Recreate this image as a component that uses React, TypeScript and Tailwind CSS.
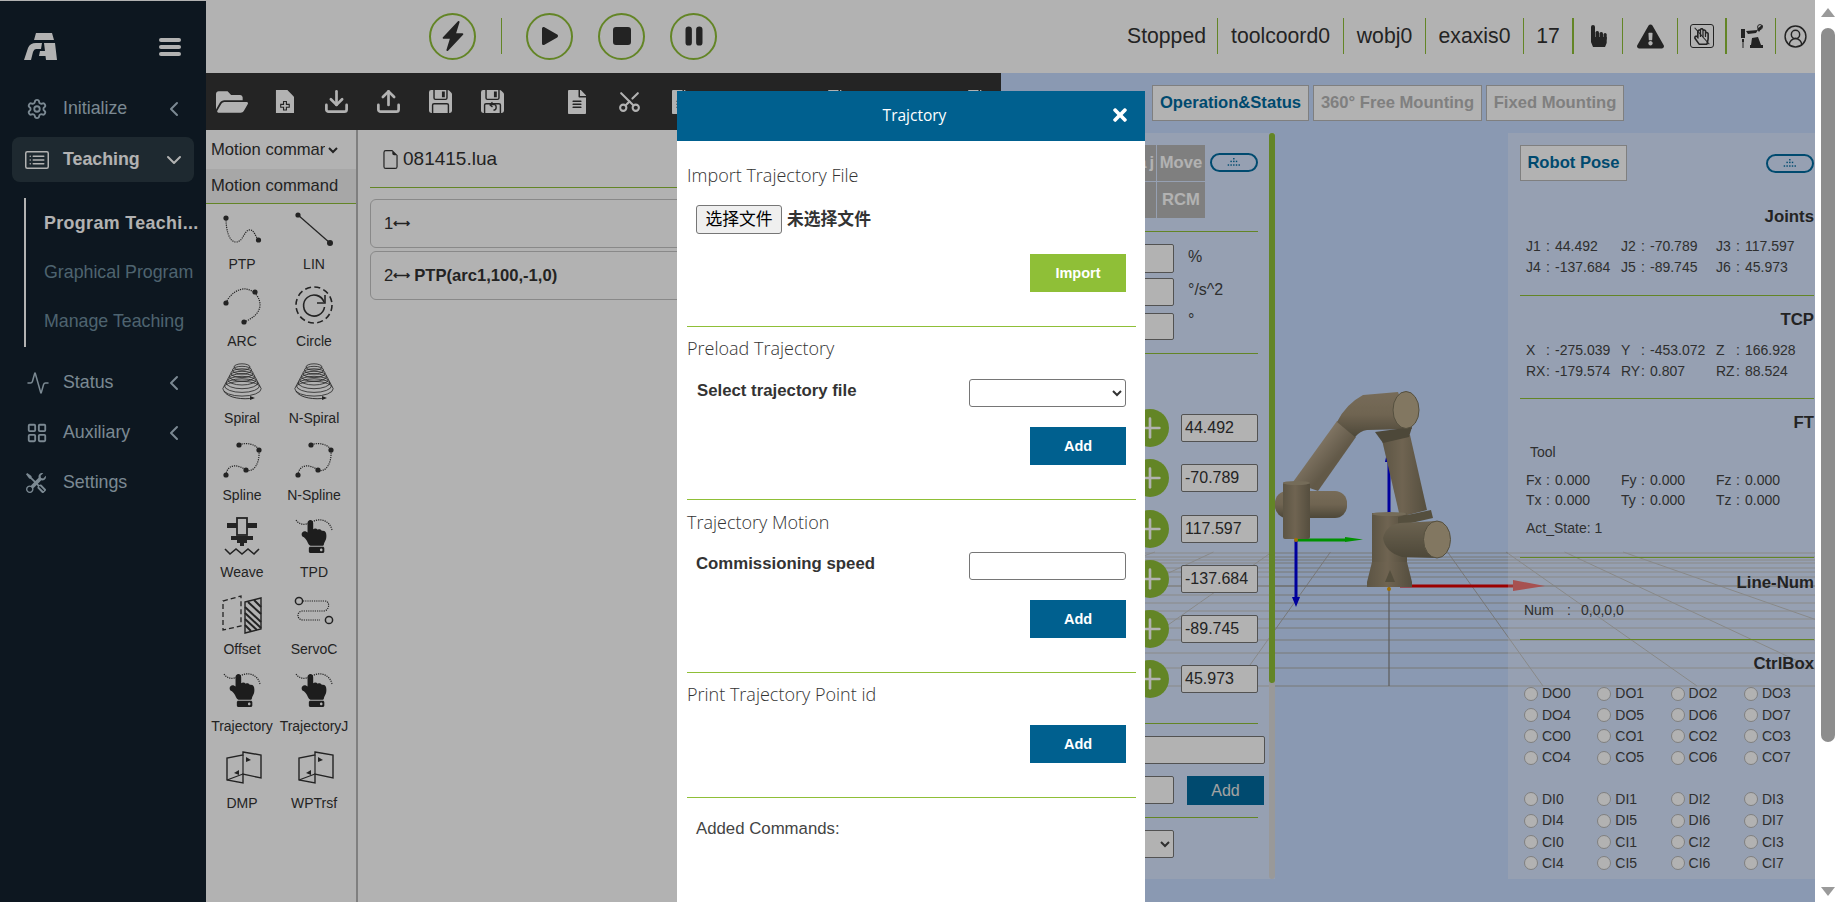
import {
  Activity,
  ChevronDown,
  ChevronLeft,
  CircleUserRound,
  Download,
  LayoutGrid,
  Plus,
  Scissors,
  Settings,
  Upload,
} from "lucide-react";
import {
  BsCardList,
  BsFileEarmark,
  BsFloppyFill,
  BsLightningChargeFill,
  BsPauseFill,
  BsPlayFill,
  BsStopFill,
  BsTools,
} from "react-icons/bs";
import {
  FaExclamationTriangle,
  FaFileAlt,
  FaFolderOpen,
  FaHandPointUp,
  FaRegHandPaper,
  FaTimes,
} from "react-icons/fa";
import type { ReactNode } from "react";

const DOT = "1.2 1";

const Dotted = ({ d }: { d: string }) => (
  <path d={d} fill="none" stroke="#333" strokeWidth="1.2" strokeDasharray={DOT} />
);

const Dots = ({ pts, r = 2.6 }: { pts: number[][]; r?: number }) => (
  <>
    {pts.map(([x, y]) => (
      <circle key={`${x}-${y}`} cx={x} cy={y} r={r} fill="#333" />
    ))}
  </>
);

const Box = ({ children }: { children: ReactNode }) => (
  <svg viewBox="0 0 40 40" className="w-10 h-10 overflow-visible">
    {children}
  </svg>
);

const PtpIcon = () => (
  <Box>
    <Dotted d="M4 10C4 22 7 34 14 34C21 34 22 23 27 22C32 21 33 28 36.5 32" />
    <Dots pts={[[4, 10], [36.5, 32]]} />
  </Box>
);

const LinIcon = () => (
  <Box>
    <path d="M4 7L36 35" stroke="#333" strokeWidth="1.2" />
    <Dots pts={[[4, 7]]} />
    <Dots pts={[[36, 35]]} r={3} />
  </Box>
);

const ArcIcon = () => (
  <Box>
    <Dotted d="M4 18C8 8 18 3 24 4C32 5 38 12 38 20C38 28 30 34 22 37" />
    <Dots pts={[[4, 18], [33, 7], [22, 37]]} />
  </Box>
);

const CircleIcon = () => (
  <Box>
    <circle cx="20" cy="20" r="18" fill="none" stroke="#333" strokeWidth="1.6" strokeDasharray="6 3.4" />
    <path d="M30 17A10.5 10.5 0 1 0 30.5 22" fill="none" stroke="#333" strokeWidth="1.6" />
    <path d="M31 10V18H23" fill="none" stroke="#333" strokeWidth="1.6" />
  </Box>
);

const SpiralIcon = () => (
  <Box>
    {[0, 1, 2, 3, 4, 5, 6, 7].map((i) => (
      <ellipse
        key={i}
        cx="20"
        cy={5 + i * 3.1}
        rx={8 + i * 1.6}
        ry={3.2 + i * 0.6}
        fill="none"
        stroke="#333"
        strokeWidth="0.8"
      />
    ))}
    <path d="M2 29C5 36 22 38 31 36" fill="none" stroke="#333" strokeWidth="0.9" />
    <path d="M28 34L33 36L28 38Z" fill="#333" />
  </Box>
);

const SplineIcon = () => (
  <Box>
    <Dotted d="M4 36C5 26 14 24 24 31C32 34 38 24 37 11C34 5 24 3 17 6" />
    <Dots pts={[[17, 6], [37, 11], [24, 31], [4, 36]]} />
  </Box>
);

const WeaveIcon = () => (
  <Box>
    <rect x="5" y="7" width="10" height="5" fill="#333" />
    <rect x="25" y="7" width="10" height="5" fill="#333" />
    <rect x="15" y="2" width="10" height="17" fill="none" stroke="#333" strokeWidth="1.8" />
    <rect x="9" y="20" width="22" height="4" fill="#333" />
    <rect x="15" y="24" width="10" height="3" fill="#333" />
    <rect x="18" y="27" width="4" height="3" fill="#333" />
    <path d="M3 33L8 38L14 33L20 38L26 33L32 38L37 33" fill="none" stroke="#333" strokeWidth="1.6" />
  </Box>
);

const HandTrace = () => (
  <Box>
    <foreignObject x="6" y="4" width="28" height="36">
      <div className="flex justify-center text-[#2a2a2a]">
        <FaHandPointUp size={33} />
      </div>
    </foreignObject>
    <Dotted d="M2 4C7 11 14 8 20 5C27 2 36 5 38 14" />
  </Box>
);

const OffsetIcon = () => (
  <Box>
    <path d="M1 8L19 3V33L1 37Z" fill="none" stroke="#333" strokeWidth="1.3" strokeDasharray="5 3" />
    <path d="M23 9L39 5V36L23 40Z" fill="none" stroke="#333" strokeWidth="1.4" />
    <path d="M23 14L39 29M23 20L39 35M23 26L35 37M23 32L29 38M26 9L39 21M32 7L39 14" stroke="#333" strokeWidth="2" />
  </Box>
);

const ServoIcon = () => (
  <Box>
    <Dotted d="M9 8H31C36 8 36 17 30 18H8C2 19 3 27 9 27H26" />
    <circle cx="5" cy="8" r="3.6" fill="none" stroke="#333" strokeWidth="1.5" />
    <circle cx="35" cy="27" r="3.6" fill="none" stroke="#333" strokeWidth="1.5" />
  </Box>
);

const DmpIcon = () => (
  <Box>
    <path d="M21 5L39 8V31L21 27V36L5 33V11L21 8Z" fill="none" stroke="#333" strokeWidth="1.4" />
    <path d="M21 8V27M21 27L5 33" fill="none" stroke="#333" strokeWidth="1.2" />
    <path d="M24 10L29 13L24 15Z" fill="#333" />
    <path d="M17 28L12 26L17 23Z" fill="#333" />
  </Box>
);

const commands: { label: string; icon: ReactNode }[] = [
  { label: "PTP", icon: <PtpIcon /> },
  { label: "LIN", icon: <LinIcon /> },
  { label: "ARC", icon: <ArcIcon /> },
  { label: "Circle", icon: <CircleIcon /> },
  { label: "Spiral", icon: <SpiralIcon /> },
  { label: "N-Spiral", icon: <SpiralIcon /> },
  { label: "Spline", icon: <SplineIcon /> },
  { label: "N-Spline", icon: <SplineIcon /> },
  { label: "Weave", icon: <WeaveIcon /> },
  { label: "TPD", icon: <HandTrace /> },
  { label: "Offset", icon: <OffsetIcon /> },
  { label: "ServoC", icon: <ServoIcon /> },
  { label: "Trajectory", icon: <HandTrace /> },
  { label: "TrajectoryJ", icon: <HandTrace /> },
  { label: "DMP", icon: <DmpIcon /> },
  { label: "WPTrsf", icon: <DmpIcon /> },
];

const Logo = () => (
  <svg viewBox="24 22 33 27" className="w-[33px] h-[27px]" fill="#fff">
    <path d="M36 22H52L54 29H34Z" />
    <path d="M24 49L28 37Q30 32 36 32H42L41 38H36Q34 38 33 41L31 49Z" />
    <path d="M44 32H55L57 49H46L45.5 45H39L40 40H45Z" />
  </svg>
);

const Hamburger = () => (
  <div className="flex flex-col gap-[3px] w-[22px]">
    <div className="h-[4px] rounded-sm bg-white" />
    <div className="h-[4px] rounded-sm bg-white" />
    <div className="h-[4px] rounded-sm bg-white" />
  </div>
);

const NavItem = ({
  icon,
  label,
  className,
}: {
  icon: ReactNode;
  label: string;
  className: string;
}) => (
  <div className={`flex items-center h-[45px] mx-3 pl-[14px] pr-[8px] text-[#b0c4d2] ${className}`}>
    <span className="w-[37px] shrink-0">{icon}</span>
    <span className="flex-1 text-[17.8px]">{label}</span>
    <ChevronLeft size={24} strokeWidth={2} />
  </div>
);

const Sidebar = () => (
  <aside className="w-[206px] shrink-0 mt-px bg-[#13222e] flex flex-col">
    <div className="flex items-center justify-between pl-6 pr-[25px] pt-[21px] h-[70px]">
      <Logo />
      <Hamburger />
    </div>
    <NavItem className="mt-[15px]" label="Initialize" icon={<Settings size={22} />} />
    <div className="flex items-center h-[45px] mx-3 mt-[6px] pl-[13px] pr-[8px] rounded-lg bg-[#2c3c45] text-white">
      <span className="w-[38px] shrink-0">
        <BsCardList size={24} />
      </span>
      <span className="flex-1 text-[17.8px] font-bold">Teaching</span>
      <ChevronDown size={24} strokeWidth={2} />
    </div>
    <div className="ml-6 mt-[16px] h-[149px] pt-[1px] border-l-2 border-white pl-[18px] flex flex-col text-[#708fa0] text-[17.8px]">
      <div className="h-[49px] shrink-0 pb-[1px] flex items-center font-bold text-white tracking-[0.4px] whitespace-nowrap">
        Program Teachi...
      </div>
      <div className="h-[49px] shrink-0 flex items-center whitespace-nowrap">Graphical Program</div>
      <div className="h-[49px] shrink-0 flex items-center whitespace-nowrap">Manage Teaching</div>
    </div>
    <NavItem className="mt-[13px]" label="Status" icon={<Activity size={24} strokeWidth={1.5} />} />
    <NavItem className="mt-[5px]" label="Auxiliary" icon={<LayoutGrid size={22} />} />
    <div className="flex items-center h-[45px] mx-3 mt-[5px] pl-[14px] text-[#b0c4d2]">
      <span className="w-[37px] shrink-0">
        <BsTools size={20} />
      </span>
      <span className="text-[17.8px]">Settings</span>
    </div>
  </aside>
);

const RoundButton = ({ children }: { children: ReactNode }) => (
  <button className="w-[47px] h-[47px] rounded-full border-[2.5px] border-[#8fbf37] flex items-center justify-center text-[#333]">
    {children}
  </button>
);

const StatusCell = ({
  children,
  className,
}: {
  children: ReactNode;
  className: string;
}) => (
  <div className={`h-[36px] flex items-center justify-center border-[#8fbf37] ${className}`}>
    {children}
  </div>
);

const FingerIcon = () => (
  <svg viewBox="0 0 17 22" className="w-[17px] h-[22px]" fill="#333">
    <rect x="1" y="0" width="4" height="14" rx="2" />
    <rect x="5.5" y="6" width="3.5" height="9" rx="1.5" />
    <rect x="9.5" y="7" width="3.5" height="8" rx="1.5" />
    <rect x="13.5" y="8" width="3.2" height="7" rx="1.5" />
    <path d="M1 12H16.7V18L15 22H3L1 17Z" />
  </svg>
);

const NoTouchIcon = () => (
  <div className="relative w-[24px] h-[24px] rounded-[3px] border border-[#333] flex items-center justify-center text-[#333]">
    <FaRegHandPaper size={17} />
    <svg viewBox="0 0 24 24" className="absolute inset-0 w-full h-full">
      <path d="M4 3L20 21" stroke="#333" strokeWidth="1.2" />
    </svg>
  </div>
);

const RobotSmall = () => (
  <svg viewBox="0 0 24 24" className="w-[24px] h-[24px]" fill="#333">
    <rect x="11" y="21" width="13" height="3" />
    <path d="M13 14L19 13L22 21H12Z" />
    <path d="M7 7L19 6L17 9L9 10Z" />
    <path d="M18 5L23 1L24 2L20 8Z" />
    <circle cx="21" cy="3" r="2.4" fill="none" stroke="#333" />
    <rect x="2" y="5" width="4" height="9" />
    <rect x="3" y="15" width="2" height="3" />
    <path d="M4 18V24" stroke="#333" strokeWidth="1" />
  </svg>
);

const TopBar = () => (
  <header className="h-[73px] shrink-0 bg-white flex items-center justify-between pb-[1px] text-[#333]">
    <div className="flex items-center pl-[223px]">
      <RoundButton>
        <BsLightningChargeFill size={30} />
      </RoundButton>
      <div className="w-px h-[36px] bg-[#8fbf37] ml-[25px] mr-[24px]" />
      <div className="flex items-center gap-[25px]">
        <RoundButton>
          <BsPlayFill size={32} />
        </RoundButton>
        <RoundButton>
          <BsStopFill size={32} />
        </RoundButton>
        <RoundButton>
          <BsPauseFill size={34} />
        </RoundButton>
      </div>
    </div>
    <div className="flex items-center text-[21.2px]">
      <StatusCell className="w-[105px] border-r pl-[3px]">Stopped</StatusCell>
      <StatusCell className="w-[126px] border-r">toolcoord0</StatusCell>
      <StatusCell className="w-[82px] border-r">wobj0</StatusCell>
      <StatusCell className="w-[98px] border-r">exaxis0</StatusCell>
      <StatusCell className="w-[50px] border-r-2">17</StatusCell>
      <StatusCell className="w-[49px] border-r">
        <FingerIcon />
      </StatusCell>
      <StatusCell className="w-[55px] border-r">
        <FaExclamationTriangle size={27} />
      </StatusCell>
      <StatusCell className="w-[49px] border-r-2">
        <NoTouchIcon />
      </StatusCell>
      <StatusCell className="w-[49px] border-r">
        <RobotSmall />
      </StatusCell>
      <StatusCell className="w-[39px]">
        <CircleUserRound size={25} strokeWidth={1.4} />
      </StatusCell>
    </div>
  </header>
);

const NewFileIcon = () => (
  <svg viewBox="0 0 20 24" className="w-[19px] h-[23px]">
    <path d="M1 0H13L20 7V24H1Z" fill="#fff" />
    <path d="M9 12H12V15H15V18H12V21H9V18H6V15H9Z" fill="none" stroke="#343434" strokeWidth="1.2" />
  </svg>
);

const SaveAsIcon = () => (
  <div className="relative">
    <BsFloppyFill size={23} />
    <svg viewBox="0 0 12 12" className="absolute left-[6px] top-[11px] w-[11px] h-[11px]">
      <path d="M3 4H8Q10 4 10 7T7 10M3 4L6 1.5M3 4L6 6.5" fill="none" stroke="#343434" strokeWidth="1.5" />
    </svg>
  </div>
);

const ToolbarSlot = ({ children }: { children?: ReactNode }) => (
  <div className="w-[52px] shrink-0 flex items-center justify-center text-white">{children}</div>
);

const Toolbar = () => (
  <div className="h-[57px] shrink-0 bg-[#343434] flex items-center">
    <ToolbarSlot>
      <FaFolderOpen size={32} />
    </ToolbarSlot>
    <ToolbarSlot>
      <NewFileIcon />
    </ToolbarSlot>
    <ToolbarSlot>
      <Download size={27} strokeWidth={2.4} />
    </ToolbarSlot>
    <ToolbarSlot>
      <Upload size={27} strokeWidth={2.4} />
    </ToolbarSlot>
    <ToolbarSlot>
      <BsFloppyFill size={23} />
    </ToolbarSlot>
    <ToolbarSlot>
      <SaveAsIcon />
    </ToolbarSlot>
    <div className="w-px h-[38px] bg-white ml-[16px] mr-[17px]" />
    <ToolbarSlot>
      <FaFileAlt size={24} />
    </ToolbarSlot>
    <ToolbarSlot>
      <Scissors size={25} className="-rotate-90" />
    </ToolbarSlot>
    <ToolbarSlot>
      <FaFileAlt size={24} />
    </ToolbarSlot>
    <ToolbarSlot>
      <Upload size={24} />
    </ToolbarSlot>
    <ToolbarSlot>
      <Upload size={24} />
    </ToolbarSlot>
    <ToolbarSlot>
      <FaFileAlt size={24} />
    </ToolbarSlot>
    <div className="w-px h-[38px] bg-white ml-[8px] mr-[28px]" />
    <ToolbarSlot>
      <Upload size={24} />
    </ToolbarSlot>
    <ToolbarSlot>
      <FaFileAlt size={24} />
    </ToolbarSlot>
  </div>
);

const CommandPanel = () => (
  <div className="w-[152px] shrink-0 border-r-2 border-[#b7b7b7] bg-white text-[#333]">
    <div className="h-[39px] flex items-center pl-[1px]">
      <select className="w-[134px] h-[30px] bg-white text-[16.6px]">
        <option>Motion command</option>
      </select>
    </div>
    <div className="h-[35px] flex items-center pl-[5px] bg-[#f0f0f0] border-b border-[#8fbf37] text-[16.6px]">
      Motion command
    </div>
    <div className="grid grid-cols-[72px_72px] ">
      {commands.map((c) => (
        <div key={c.label} className="h-[77px] pt-[4px] flex flex-col items-center">
          {c.icon}
          <span className="mt-[6px] h-5 leading-5 text-[14px] whitespace-nowrap">{c.label}</span>
        </div>
      ))}
    </div>
  </div>
);

const Arrow = () => <span className="text-[11.5px] font-bold">⟷</span>;

const CodeArea = () => (
  <div className="flex-1 bg-white px-3 text-[#333]">
    <div className="h-[58px] flex items-center border-b border-[#8fbf37] pl-[11px] pt-[2px]">
      <BsFileEarmark size={19} />
      <span className="ml-[3px] text-[19px]">081415.lua</span>
    </div>
    <div className="mt-[11px] flex flex-col gap-[3px]">
      <div className="h-[49px] flex items-center rounded-md border border-[#c4c4c4] pl-[13px] pt-[1px] text-[16.6px]">
        1<Arrow />
      </div>
      <div className="h-[49px] flex items-center rounded-md border border-[#c4c4c4] pl-[13px] pt-[1px] text-[16.6px]">
        2<Arrow /> <b className="ml-1">PTP(arc1,100,-1,0)</b>
      </div>
    </div>
  </div>
);

const gridYs = [553, 557, 560, 563, 568, 572, 577, 586, 595, 603, 611, 619, 628, 640, 653, 668, 686];

const Scene = () => (
  <svg viewBox="1001 73 814 829" className="absolute left-0 top-0 w-[814px] h-[829px]">
    <defs>
      <linearGradient id="armH" x1="0" y1="0" x2="0" y2="1">
        <stop offset="0" stopColor="#ab9b7f" />
        <stop offset="0.5" stopColor="#a09075" />
        <stop offset="1" stopColor="#6f6752" />
      </linearGradient>
      <linearGradient id="armDark" x1="0" y1="0" x2="0" y2="1">
        <stop offset="0" stopColor="#9c8f74" />
        <stop offset="1" stopColor="#6f6752" />
      </linearGradient>
      <linearGradient id="armV" x1="0" y1="0" x2="1" y2="0">
        <stop offset="0" stopColor="#857a62" />
        <stop offset="0.45" stopColor="#a09075" />
        <stop offset="1" stopColor="#7a705a" />
      </linearGradient>
      <linearGradient id="fore" gradientUnits="userSpaceOnUse" x1="1300" y1="430" x2="1335" y2="460">
        <stop offset="0" stopColor="#a5957a" />
        <stop offset="0.5" stopColor="#b6a68d" />
        <stop offset="1" stopColor="#8d8068" />
      </linearGradient>
    </defs>
    {gridYs.map((y) => (
      <line key={y} x1="1145" x2="1815" y1={y} y2={y} stroke="#ababab" strokeWidth="1.2" />
    ))}
    {[-4, -3, -2, -1, 1, 2, 3, 4].map((k) => (
      <line
        key={k}
        x1={1389 + k * 154 * 0.38}
        y1="552"
        x2={1389 + k * 154}
        y2="686"
        stroke="#ababab"
        strokeWidth="1"
      />
    ))}
    <line x1="1389" x2="1389" y1="552" y2="686" stroke="#848484" strokeWidth="1.2" />
    <line x1="1145" x2="1815" y1="586" y2="586" stroke="#949494" strokeWidth="1.2" />

    <path d="M1389 513V462" stroke="#0000e0" strokeWidth="3" />
    <path d="M1385 462L1386 457L1392 462Z" fill="#0000e0" />
    <path d="M1400 586H1515" stroke="#e00000" strokeWidth="3" />
    <path d="M1513 580L1545 586L1513 591Z" fill="#e83838" />
    <path d="M1296 540H1345" stroke="#00d000" strokeWidth="3" />
    <path d="M1345 537L1363 539.5L1345 542Z" fill="#00d000" />
    <path d="M1296 540V598" stroke="#0000e0" strokeWidth="3" />
    <path d="M1292 597L1296 607L1300 597Z" fill="#0000e0" />

    <path d="M1337 421L1293 482L1318 491L1356 437Z" fill="url(#fore)" />
    <path d="M1337 422Q1346 404 1363 395L1398 392L1412 429L1367 430Q1360 431 1355 437Z" fill="url(#armH)" />
    <path d="M1382 440L1410 435L1427 510L1400 517Z" fill="url(#armV)" />
    <path d="M1375 432L1412 427L1409 437L1383 443Z" fill="#6f6752" />
    <ellipse cx="1406" cy="410" rx="13" ry="18.5" fill="#baab8c" stroke="#7a725a" />
    <rect x="1372" y="513" width="35" height="49" fill="url(#armV)" />
    <ellipse cx="1389.5" cy="514" rx="17.5" ry="2" fill="#a89b80" />
    <path d="M1372 562H1407L1412 582V587H1367V582Z" fill="url(#armV)" />
    <path d="M1390 570L1385 582H1395Z" fill="#7a725a" />
    <path d="M1398 517L1431 510L1433 518L1398 526Z" fill="#7a725a" />
    <path d="M1383 538Q1386 525 1400 523L1437 521V558L1402 557Q1385 552 1383 538Z" fill="url(#armDark)" />
    <ellipse cx="1437" cy="539.5" rx="13.5" ry="18.5" fill="#baab8c" stroke="#7a725a" />
    <rect x="1275" y="491" width="72" height="27" rx="12" fill="url(#armH)" />
    <rect x="1283" y="482" width="27" height="57" rx="2" fill="url(#armV)" />
    <ellipse cx="1296.5" cy="483" rx="13.5" ry="2" fill="#a89b80" />
    <circle cx="1296" cy="540" r="2" fill="#e8a000" />
    <circle cx="1389" cy="589" r="2" fill="#e8a000" />
  </svg>
);

const Pill = () => (
  <div className="w-[48px] h-[19px] rounded-full border-2 border-[#006ba0] flex items-center justify-center">
    <svg viewBox="0 0 20 10" className="w-[18px] h-[9px]" fill="#006ba0">
      <rect x="9" y="0" width="1.6" height="1.6" />
      <rect x="6" y="3" width="1.6" height="1.6" />
      <rect x="9" y="3" width="1.6" height="1.6" />
      <rect x="12" y="3" width="1.6" height="1.6" />
      <rect x="3" y="7" width="1.6" height="1.6" />
      <rect x="6" y="7" width="1.6" height="1.6" />
      <rect x="9" y="7" width="1.6" height="1.6" />
      <rect x="12" y="7" width="1.6" height="1.6" />
      <rect x="15" y="7" width="1.6" height="1.6" />
    </svg>
  </div>
);

const ValueBox = ({ className, children }: { className: string; children?: ReactNode }) => (
  <div className={`rounded-[2px] border border-[#767676] bg-white text-[#333] flex items-center ${className}`}>
    {children}
  </div>
);

const jointValues = ["44.492", "-70.789", "117.597", "-137.684", "-89.745", "45.973"];

const OperationPanel = () => (
  <div className="w-[274px] h-[746px] flex bg-white/30 relative">
    <div className="w-[268px] pr-[11px] text-[#444]">
      <div className="mt-3 h-[74px] flex justify-end items-start">
        <div className="grid grid-cols-[48px_49px] gap-y-px font-bold text-[16.6px] text-white">
          <div className="h-[36px] bg-[#b7b7b7] flex items-center justify-end pr-[2px]">
            Tra<span className="ml-[3px]">j</span>
          </div>
          <div className="h-[36px] bg-[#b7b7b7] flex items-center justify-center ml-px">Move</div>
          <div className="h-[36px] bg-[#b7b7b7]" />
          <div className="h-[36px] bg-[#b7b7b7] flex items-center justify-center ml-px">RCM</div>
        </div>
        <div className="ml-[5px] mt-2">
          <Pill />
        </div>
      </div>
      <div className="mt-3 border-t border-[#8fbf37]" />
      <div className="mt-3 flex justify-end">
        <ValueBox className="w-[100px] h-[29px]" />
        <span className="w-[84px] pl-[14px] text-[16px] leading-[26px]">%</span>
      </div>
      <div className="mt-[5px] flex justify-end">
        <ValueBox className="w-[100px] h-[28px]" />
        <span className="w-[84px] pl-[14px] text-[16px] leading-[24px]">°/s^2</span>
      </div>
      <div className="mt-[7px] flex justify-end">
        <ValueBox className="w-[100px] h-[27px]" />
        <span className="w-[84px] pl-[14px] text-[16px] leading-[14px]">°</span>
      </div>
      <div className="mt-[13px] border-t border-[#8fbf37]" />
      <div className="mt-[55px] flex flex-col gap-[12.3px]">
        {jointValues.map((v) => (
          <div key={v} className="h-[38px] flex items-center justify-end">
            <div className="w-[38px] h-[38px] rounded-full bg-[#8fbf37] flex items-center justify-center text-white">
              <Plus size={32} strokeWidth={2} />
            </div>
            <ValueBox className="ml-3 w-[77px] h-[28px] pl-[3px] text-[16px]">{v}</ValueBox>
          </div>
        ))}
      </div>
      <div className="mt-[25px] border-t border-[#8fbf37]" />
      <ValueBox className="mt-3 h-[28px] -mr-[7px]" />
      <div className="mt-3 flex justify-end">
        <ValueBox className="w-[100px] h-[28px]" />
        <button className="ml-[13px] mr-[-6px] w-[77px] h-[29px] bg-[#006ba0] text-[#e8e8e8] text-[16px]">Add</button>
      </div>
      <div className="mt-3 border-t border-[#8fbf37]" />
      <div className="mt-3 flex justify-end pr-[84px]">
        <select className="w-[100px] h-[28px] rounded-[2px] border border-[#767676] bg-white" />
      </div>
    </div>
    <div className="w-[6px] h-full rounded-full bg-[#dcdcdc]">
      <div className="w-[6px] h-[550px] rounded-full bg-[#8fbf37]" />
    </div>
  </div>
);

const Heading = ({ children }: { children: ReactNode }) => (
  <div className="h-5 leading-5 text-right font-bold text-[16.8px] text-[#333]">{children}</div>
);

const DataCell = ({ name, value }: { name: string; value: string }) => (
  <div className="flex h-full items-center">
    <span className="w-[24px] flex justify-between">
      <span>{name}</span>
      <span>:</span>
    </span>
    <span className="ml-[5px]">{value}</span>
  </div>
);

const DataGrid = ({ rows, className }: { rows: string[][]; className: string }) => (
  <div className={`grid grid-cols-[95px_95px_95px] pl-[6px] text-[14px] text-[#444] ${className}`}>
    {rows.map(([name, value]) => (
      <DataCell key={name} name={name} value={value} />
    ))}
  </div>
);

const outputs = ["DO0", "DO1", "DO2", "DO3", "DO4", "DO5", "DO6", "DO7", "CO0", "CO1", "CO2", "CO3", "CO4", "CO5", "CO6", "CO7"];
const inputs = ["DI0", "DI1", "DI2", "DI3", "DI4", "DI5", "DI6", "DI7", "CI0", "CI1", "CI2", "CI3", "CI4", "CI5", "CI6", "CI7"];

const LedGrid = ({ names, className }: { names: string[]; className: string }) => (
  <div className={`pl-[4px] grid grid-cols-[73.3px_73.3px_73.3px_73.3px] auto-rows-[21.4px] text-[14px] text-[#444] ${className}`}>
    {names.map((n) => (
      <div key={n} className="flex items-center">
        <span className="w-[14px] h-[14px] rounded-full border border-[#b7b7b7] bg-white" />
        <span className="ml-1">{n}</span>
      </div>
    ))}
  </div>
);

const RobotPosePanel = () => (
  <div className="w-[307px] h-[746px] bg-white/30 relative pl-3 pr-px pt-3">
    <div className="flex items-center justify-between h-[36px]">
      <div className="w-[107px] h-[36px] border border-[#b7b7b7] bg-white flex items-center justify-center font-bold text-[16.6px] text-[#006ba0]">
        Robot Pose
      </div>
      <Pill />
    </div>
    <div className="mt-3 border-b border-[#8fbf37] h-[103px] pt-[14px]">
      <Heading>Joints</Heading>
      <DataGrid
        className="mt-[9px] auto-rows-[21px]"
        rows={[
          ["J1", "44.492"],
          ["J2", "-70.789"],
          ["J3", "117.597"],
          ["J4", "-137.684"],
          ["J5", "-89.745"],
          ["J6", "45.973"],
        ]}
      />
    </div>
    <div className="border-b border-[#8fbf37] h-[103px] pt-[14px]">
      <Heading>TCP</Heading>
      <DataGrid
        className="mt-[10px] auto-rows-[21px]"
        rows={[
          ["X", "-275.039"],
          ["Y", "-453.072"],
          ["Z", "166.928"],
          ["RX", "-179.574"],
          ["RY", "0.807"],
          ["RZ", "88.524"],
        ]}
      />
    </div>
    <div className="border-b border-[#8fbf37] h-[159px] pt-[14px]">
      <Heading>FT</Heading>
      <div className="mt-[9px] h-5 leading-5 pl-[10px] text-[14px] text-[#444]">Tool</div>
      <DataGrid
        className="mt-2 auto-rows-[20px]"
        rows={[
          ["Fx", "0.000"],
          ["Fy", "0.000"],
          ["Fz", "0.000"],
          ["Tx", "0.000"],
          ["Ty", "0.000"],
          ["Tz", "0.000"],
        ]}
      />
      <div className="mt-2 h-5 leading-5 pl-[6px] text-[14px] text-[#444]">Act_State: 1</div>
    </div>
    <div className="border-b border-[#8fbf37] h-[82px] pt-[15px]">
      <Heading>Line-Num</Heading>
      <div className="mt-[7px] h-5 leading-5 pl-1 text-[14px] text-[#444] flex">
        <span className="w-[43px]">Num</span>
        <span className="w-[14px]">:</span>
        <span>0,0,0,0</span>
      </div>
    </div>
    <div className="pt-[14px]">
      <Heading>CtrlBox</Heading>
      <LedGrid names={outputs} className="mt-[9px]" />
      <LedGrid names={inputs} className="mt-[20px]" />
    </div>
  </div>
);

const ViewTab = ({ children, className }: { children: ReactNode; className: string }) => (
  <div className={`h-[36px] border border-[#b7b7b7] bg-white flex items-center justify-center font-bold text-[16.6px] whitespace-nowrap ${className}`}>
    {children}
  </div>
);

const RobotView = () => (
  <section className="relative flex-1 bg-[#c6dcff] overflow-hidden">
    <Scene />
    <div className="relative pl-[151px] pt-3 flex gap-1">
      <ViewTab className="w-[157px] text-[#006ba0]">Operation&amp;Status</ViewTab>
      <ViewTab className="w-[169px] text-[#b7b7b7]">360° Free Mounting</ViewTab>
      <ViewTab className="w-[138px] text-[#b7b7b7]">Fixed Mounting</ViewTab>
    </div>
    <div className="mt-3 flex justify-between">
      <OperationPanel />
      <RobotPosePanel />
    </div>
  </section>
);

const PrimaryButton = ({ label, className }: { label: string; className: string }) => (
  <div className="flex justify-end pr-[10px]">
    <button className={`w-[96px] h-[38px] pt-px text-white font-bold text-[14.5px] ${className}`}>{label}</button>
  </div>
);

const SectionTitle = ({ children }: { children: ReactNode }) => (
  <div className="h-6 leading-6 text-[18px] font-light text-[#333] font-['Open_Sans',sans-serif]">{children}</div>
);

const TrajectoryModal = () => (
  <div className="absolute left-[677px] top-[91px] bottom-0 w-[468px] bg-white text-[#333] overflow-hidden">
    <div className="relative h-[50px] bg-[#00608f] text-white flex items-center justify-center">
      <span className="ml-[7px] text-[15.5px] font-['Open_Sans',sans-serif]">Trajctory</span>
      <FaTimes size={20} className="absolute right-[15px] top-[14px]" />
    </div>
    <div className="pl-[10px] pr-[9px]">
      <section className="pt-[22px] pb-[34px] border-b border-[#8fbf37]">
        <SectionTitle>Import Trajectory File</SectionTitle>
        <div className="mt-[18px] h-[29px] pl-[9px] flex items-center">
          <button className="w-[86px] h-[29px] rounded-[3px] border border-[#767676] bg-[#efefef] text-[16.8px] text-black">
            选择文件
          </button>
          <span className="ml-[5px] font-bold text-[16.8px]">未选择文件</span>
        </div>
        <div className="mt-5">
          <PrimaryButton label="Import" className="bg-[#8fbf37]" />
        </div>
      </section>
      <section className="pt-[9px] pb-[34px] border-b border-[#8fbf37]">
        <SectionTitle>Preload Trajectory</SectionTitle>
        <div className="mt-[19px] h-[28px] pl-[10px] pr-[10px] flex justify-between">
          <span className="font-bold text-[16.8px] leading-[23px]">Select trajectory file</span>
          <select className="w-[157px] h-[28px] rounded-[3px] border border-[#767676] bg-white" />
        </div>
        <div className="mt-5">
          <PrimaryButton label="Add" className="bg-[#00608f]" />
        </div>
      </section>
      <section className="pt-[10px] pb-[34px] border-b border-[#8fbf37]">
        <SectionTitle>Trajectory Motion</SectionTitle>
        <div className="mt-[18px] h-[28px] pl-[9px] pr-[10px] flex justify-between">
          <span className="font-bold text-[16.8px] leading-[23px]">Commissioning speed</span>
          <input className="w-[157px] h-[28px] rounded-[3px] border border-[#767676] bg-white" />
        </div>
        <div className="mt-5">
          <PrimaryButton label="Add" className="bg-[#00608f]" />
        </div>
      </section>
      <section className="pt-[9px] pb-[34px] border-b border-[#8fbf37]">
        <SectionTitle>Print Trajectory Point id</SectionTitle>
        <div className="mt-[19px]">
          <PrimaryButton label="Add" className="bg-[#00608f]" />
        </div>
      </section>
      <div className="pt-[19px] pl-[9px] leading-6 text-[16.8px] text-[#444]">Added Commands:</div>
    </div>
  </div>
);

const PageScrollbar = () => (
  <div className="w-[23px] shrink-0 bg-white flex flex-col items-center pt-[8px] pb-[6px] pl-[3px]">
    <svg viewBox="0 0 14 9" className="w-[14px] h-[9px]">
      <path d="M7 0L14 9H0Z" fill="#9a9a9a" />
    </svg>
    <div className="mt-[11px] w-[14px] h-[714px] rounded-full bg-[#8d8d8d]" />
    <div className="flex-1" />
    <svg viewBox="0 0 14 9" className="w-[14px] h-[9px]">
      <path d="M0 0H14L7 9Z" fill="#9a9a9a" />
    </svg>
  </div>
);

export default function App() {
  return (
    <div className="w-[1838px] h-[902px] flex overflow-hidden bg-white font-['Liberation_Sans','Noto_Sans_CJK_SC',sans-serif]">
      <div className="relative flex-1 flex overflow-hidden">
        <Sidebar />
        <main className="flex-1 flex flex-col min-w-0">
          <TopBar />
          <div className="flex-1 flex min-h-0">
            <div className="w-[795px] shrink-0 flex flex-col">
              <Toolbar />
              <div className="flex-1 flex min-h-0">
                <CommandPanel />
                <CodeArea />
              </div>
            </div>
            <RobotView />
          </div>
        </main>
        {/* modal backdrop */}
        <div className="absolute inset-0 bg-black/30" />
        <TrajectoryModal />
      </div>
      <PageScrollbar />
    </div>
  );
}
